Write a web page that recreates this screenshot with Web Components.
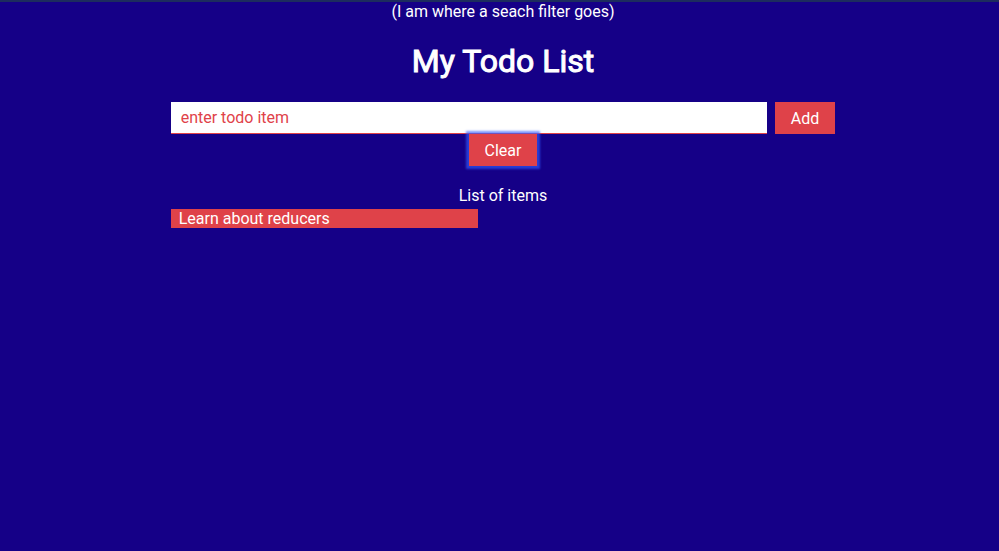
<!DOCTYPE html>
<html lang="en"><head><meta charset="utf-8"><title>My Todo List</title>
<style>
html{background:#150087}
body{margin:0;padding-left:7px;font:16px/19px Roboto,sans-serif;color:#fff;background:#150087;border-top:2px solid #1d2c5e}
</style></head><body>
<todo-app></todo-app>
<script>
function define(name, html){
  const t=document.createElement('template');t.innerHTML=html;
  customElements.define(name,class extends HTMLElement{
    constructor(){super();this.attachShadow({mode:'open'}).append(t.content.cloneNode(true));}
  });
}
define('todo-button',`<style>
:host{display:inline-block}
button{display:block;font:inherit;color:#fff;background:#df4249;border:0;border-radius:0;margin:0;padding:7px 16px 6px;cursor:pointer}
:host([active]) button{box-shadow:0 0 2px 3px rgba(50,90,255,.65)}
</style><button type="button"><slot></slot></button>`);
define('todo-form',`<style>
:host{display:flex;flex-direction:column;align-items:center}
.row{display:flex;align-self:stretch;gap:8px}
input{flex:1;min-width:0;box-sizing:border-box;height:32px;font:inherit;border:0;border-bottom:1px solid #df4249;border-radius:0;padding:0 10px;background:#fff;color:#df4249}
input::placeholder{color:#df4249;opacity:1}
</style><div class="row"><input type="text" placeholder="enter todo item" aria-label="enter todo item"><todo-button>Add</todo-button></div><todo-button active>Clear</todo-button>`);
define('todo-item',`<style>
:host{display:block;box-sizing:border-box;width:46.2%;padding:0 8px;background:#df4249}
</style><slot></slot>`);
define('todo-list',`<style>
:host{display:block;margin-top:20px}
p{margin:0 0 4px;text-align:center}
</style><p>List of items</p><slot></slot>`);
define('todo-app',`<style>
:host{display:block}
header{text-align:center}
p{margin:0}
h1{font-size:32px;line-height:38px;margin:21px 0 22px;font-weight:400;-webkit-text-stroke:1px #fff}
main{width:67%;margin:0 auto}
</style><header><p>(I am where a seach filter goes)</p><h1>My Todo List</h1></header>
<main><todo-form></todo-form><todo-list><todo-item>Learn about reducers</todo-item></todo-list></main>`);
</script></body></html>
